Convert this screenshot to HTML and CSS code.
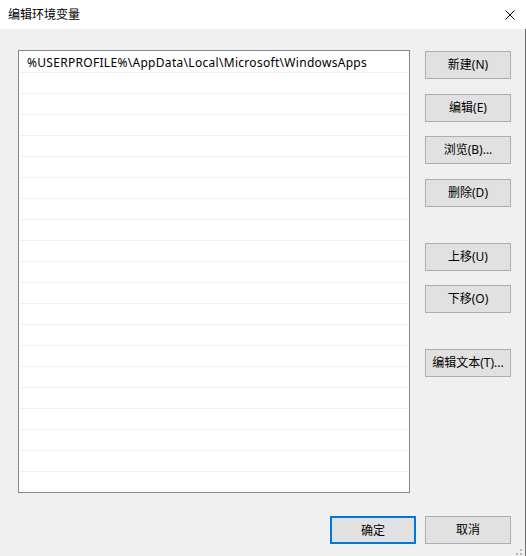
FILE: index.html
```html
<!DOCTYPE html>
<html lang="zh-CN">
<head>
<meta charset="utf-8">
<title>编辑环境变量</title>
<link rel="stylesheet" href="styles.css">
</head>
<body>
<div class="window">
  <div class="titlebar">
    <span class="title">编辑环境变量</span>
    <svg class="close" width="10" height="10" viewBox="0 0 10 10"><path d="M0.5 0.5 L9.5 9.5 M9.5 0.5 L0.5 9.5" stroke="#000" stroke-width="1" fill="none"/></svg>
  </div>
  <div class="content">
    <div class="main">
      <div class="list">
        <div class="row">%USERPROFILE%\AppData\Local\Microsoft\WindowsApps</div>
        <div class="row"></div><div class="row"></div><div class="row"></div><div class="row"></div>
        <div class="row"></div><div class="row"></div><div class="row"></div><div class="row"></div>
        <div class="row"></div><div class="row"></div><div class="row"></div><div class="row"></div>
        <div class="row"></div><div class="row"></div><div class="row"></div><div class="row"></div>
        <div class="row"></div><div class="row"></div><div class="row"></div><div class="row"></div>
      </div>
      <div class="side">
        <button class="btn">新建(N)</button>
        <button class="btn">编辑(E)</button>
        <button class="btn">浏览(B)...</button>
        <button class="btn">删除(D)</button>
        <button class="btn">上移(U)</button>
        <button class="btn">下移(O)</button>
        <button class="btn">编辑文本(T)...</button>
      </div>
    </div>
    <div class="footer">
      <button class="btn btn-default">确定</button>
      <button class="btn">取消</button>
    </div>
    <div class="grip"><i></i><i></i><i></i></div>
  </div>
</div>
</body>
</html>
```
FILE: styles.css
```css
html, body {
  margin: 0;
  padding: 0;
}
body {
  width: 526px;
  height: 556px;
  overflow: hidden;
  background: #f0f0f0;
  font-family: "Noto Sans", "Noto Sans CJK SC", sans-serif;
  font-size: 12px;
  color: #000;
}
.window {
  display: flex;
  flex-direction: column;
  height: 556px;
}
.titlebar {
  height: 29px;
  background: #fff;
  display: flex;
  align-items: center;
  justify-content: space-between;
  padding: 0 11px 0 8px;
  box-sizing: border-box;
}
.title {
  font-family: "Noto Sans CJK SC", sans-serif;
  font-size: 12px;
  line-height: 14px;
  margin-top: -2px;
}
.close {
  display: block;
}
.content {
  position: relative;
  flex: 1;
  width: 526px;
  border-right: 1px solid #6e6e6e;
  padding: 21px 0 0 18px;
  box-sizing: border-box;
}
.main {
  display: flex;
  gap: 15px;
}
.list {
  width: 390px;
  height: 440px;
  border: 1px solid #828790;
  background: #fff;
  padding: 1px 0 0 0;
  box-sizing: content-box;
  overflow: hidden;
  flex: none;
}
.row {
  height: 19px;
  padding-top: 1px;
  border-bottom: 1px solid #f0f0f0;
  margin: 0 1px;
  padding-left: 7px;
  line-height: 20px;
  white-space: nowrap;
  letter-spacing: 0.3px;
}
.side {
  display: flex;
  flex-direction: column;
  width: 86px;
  margin-top: 1px;
}
.btn {
  width: 86px;
  height: 28px;
  box-sizing: border-box;
  background: #e1e1e1;
  border: 1px solid #adadad;
  font-family: "Noto Sans", "Noto Sans CJK SC", sans-serif;
  font-size: 12px;
  color: #000;
  padding: 0;
  margin: 0;
  line-height: 26px;
  text-align: center;
  flex: none;
}
.side .btn:nth-child(2) { margin-top: 15px; }
.side .btn:nth-child(3) { margin-top: 14px; }
.side .btn:nth-child(4) { margin-top: 15px; }
.side .btn:nth-child(5) { margin-top: 36px; }
.side .btn:nth-child(6) { margin-top: 14px; }
.side .btn:nth-child(7) { margin-top: 36px; }
.footer {
  display: flex;
  justify-content: flex-end;
  gap: 9px;
  margin-top: 23px;
  padding-right: 14px;
}
.btn-default {
  border: 2px solid #0078d7;
}
.grip {
  position: absolute;
  right: 3px;
  bottom: 1px;
  width: 6px;
  height: 6px;
}
.grip i {
  position: absolute;
  width: 2px;
  height: 2px;
  background: #bcbcbc;
}
.grip i:nth-child(1) { right: 0; top: 0; }
.grip i:nth-child(2) { right: 0; bottom: 0; }
.grip i:nth-child(3) { left: 0; bottom: 0; }
```
